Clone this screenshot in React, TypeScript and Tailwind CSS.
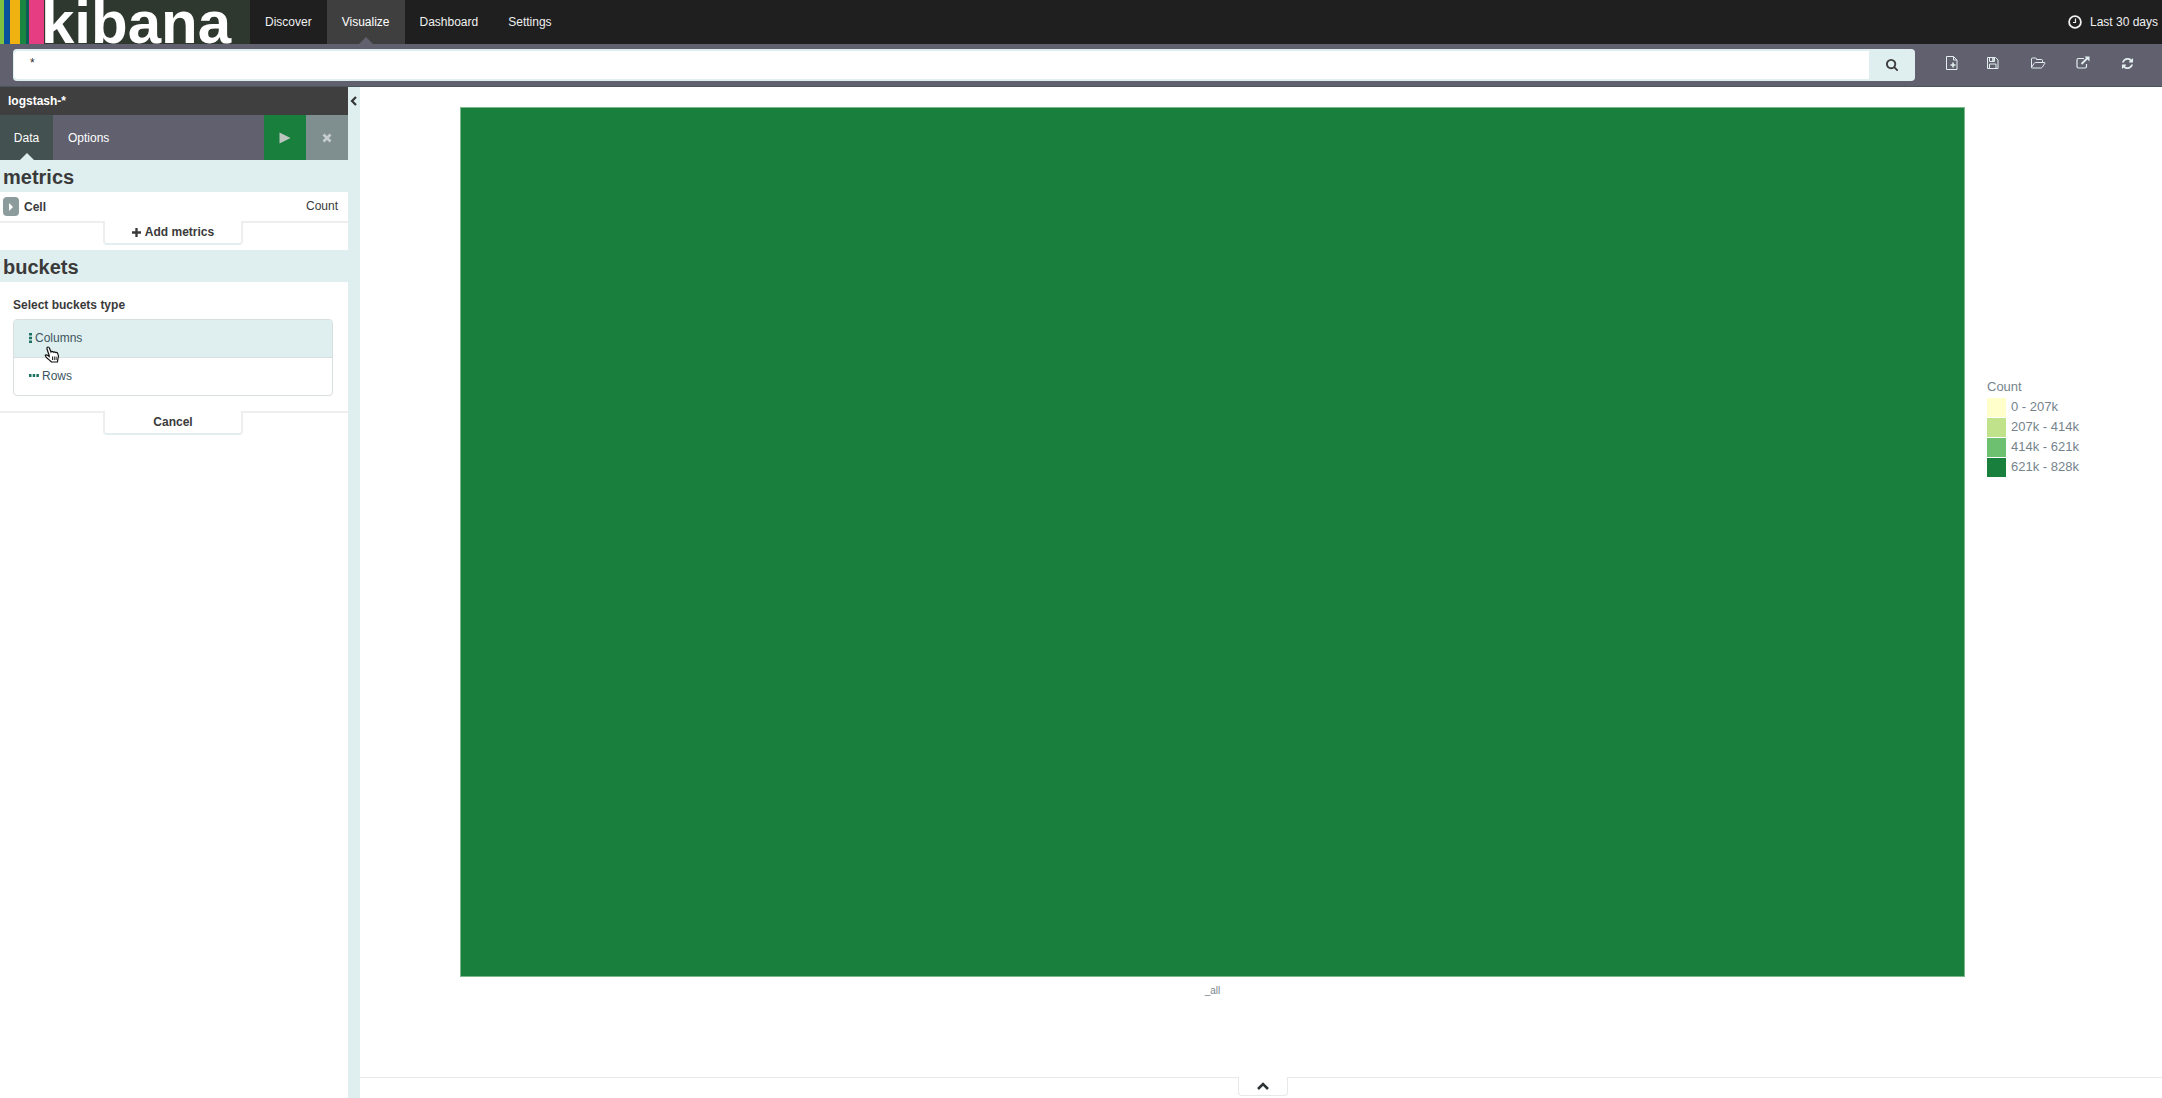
import React from 'react';

const FONT = "font-['Liberation_Sans',Arial,sans-serif]";

type IconProps = { className?: string };

const SearchIcon = ({ className }: IconProps) => (
  <svg viewBox="0 0 1792 1792" fill="currentColor" className={className} aria-hidden="true">
    <path d="M1152 704q0-185-131.5-316.5t-316.5-131.5-316.5 131.5-131.5 316.5 131.5 316.5 316.5 131.5 316.5-131.5 131.5-316.5zm512 832q0 52-38 90t-90 38q-54 0-90-38l-343-342q-179 124-399 124-143 0-273.5-55.5t-225-150-150-225-55.5-273.5 55.5-273.500 150-225 225-150 273.500-55.500 273.500 55.500 225 150 150 225 55.500 273.500q0 220-124 399l343 343q37 37 37 90z" />
  </svg>
);

const RefreshIcon = () => (
  <svg viewBox="0 0 1792 1792" fill="currentColor" className="size-[13px]" aria-hidden="true">
    <path d="M1639 1056q0 5-1 7-64 268-268 434.5t-478 166.5q-146 0-282.5-55t-243.5-157l-129 129q-19 19-45 19t-45-19-19-45v-448q0-26 19-45t45-19h448q26 0 45 19t19 45-19 45l-137 137q71 66 161 102t187 36q134 0 250-65t186-179q11-17 53-117 8-23 30-23h192q13 0 22.5 9.5t9.5 22.5zm25-800v448q0 26-19 45t-45 19h-448q-26 0-45-19t-19-45 19-45l138-138q-148-137-349-137-134 0-250 65t-186 179q-11 17-53 117-8 23-30 23h-199q-13 0-22.5-9.5t-9.5-22.5v-7q65-268 270-434.5t480-166.5q146 0 284 55.5t245 156.5l130-129q19-19 45-19t45 19 19 45z" />
  </svg>
);

const NewIcon = () => (
  <svg viewBox="0 0 14 14" fill="none" stroke="currentColor" className="size-3.5" aria-hidden="true">
    <path d="M1.500.5h7l3.500 3.500v9.500h-10.500z M8.500.5v3.500h3.500" />
    <path d="M8 6.500v5 M5.500 9h5" strokeWidth="1.600" />
  </svg>
);

const SaveIcon = () => (
  <svg viewBox="0 0 14 14" fill="none" stroke="currentColor" className="size-3.5" aria-hidden="true">
    <path d="M1.500 1.500h8l2.500 2.500v8.500h-10.500z M3.500 12.500v-4.500h6.500v4.500 M3.500 1.500v4h5v-4" />
    <path d="M7 2v3" strokeWidth="1.600" />
  </svg>
);

const FolderIcon = () => (
  <svg viewBox="0 0 16 14" fill="none" stroke="currentColor" strokeLinejoin="round" className="h-3.5 w-4" aria-hidden="true">
    <path d="M1.500 11.500v-8.500q0-1 1-1h3q1 0 1 1v.5h5q1 0 1 1v2 M1.500 11.500l2.500-4q.5-1 1.500-1h9q.8 0 .4.700l-2.500 3.900q-.6.900-1.600.9h-8.500q-.9 0-.8-.5z" />
  </svg>
);

const ShareIcon = () => (
  <svg viewBox="0 0 14 14" fill="none" stroke="currentColor" className="size-3.5" aria-hidden="true">
    <path d="M8 2.500h-5.500q-1.500 0-1.500 1.500v6.500q0 1.500 1.500 1.500h6.500q1.500 0 1.500-1.500v-2.500" strokeWidth="1.200" />
    <path d="M5.500 8l6-6" strokeWidth="1.800" />
    <path d="M8.500.5h5v5z" fill="currentColor" stroke="none" />
  </svg>
);

const ClockIcon = () => (
  <svg viewBox="0 0 14 14" fill="none" stroke="currentColor" className="size-3.5" aria-hidden="true">
    <circle cx="7" cy="7" r="5.900" strokeWidth="1.800" />
    <path d="M7.500 3.500v4h-2.500" strokeWidth="1.200" />
  </svg>
);

const HandCursor = () => (
  <svg viewBox="0 0 16 17" className="h-[17px] w-4" aria-hidden="true">
    <path
      d="M5.200 9.500L3 3Q2.700 1.200 4 1Q5 .9 5.500 2.200L7 6Q7.500 5 8.800 5.600L9.300 6.200Q10.300 5.300 11.500 6.500Q12.600 5.900 13.500 7Q15 9.500 14 12.200L13.500 16H7.500Q5 13.500 3.200 12.200Q1 10.200 1.200 9.200Q2.500 8.200 4 9.600L5.200 10.500z"
      fill="#fff"
      stroke="#111"
      strokeWidth="1.200"
    />
    <path d="M8.500 10.500v3.500 M10.300 10.500v3.500 M12.100 10.500v3.500" stroke="#111" strokeWidth=".9" />
  </svg>
);

const nav = ['Discover', 'Visualize', 'Dashboard', 'Settings'];

const tools = [
  { label: 'New visualization', icon: <NewIcon />, width: 'w-[41px]' },
  { label: 'Save visualization', icon: <SaveIcon />, width: 'w-[42px]' },
  { label: 'Load visualization', icon: <FolderIcon />, width: 'w-[48px]' },
  { label: 'Share visualization', icon: <ShareIcon />, width: 'w-[42px]' },
  { label: 'Refresh', icon: <RefreshIcon />, width: 'w-[46px]' },
];

const legend = [
  { label: '0 - 207k', color: 'bg-[#ffffcc]' },
  { label: '207k - 414k', color: 'bg-[#bfe28b]' },
  { label: '414k - 621k', color: 'bg-[#6dc06f]' },
  { label: '621k - 828k', color: 'bg-[#18803c]' },
];

function TopNav() {
  return (
    <header className="flex h-11 bg-[#1f1f1f] text-xs text-[#f0f0f0]">
      <a href="#" aria-label="kibana" className="flex w-[250px] bg-[#2e382e]">
        <span className="w-1 bg-[#7fc241]" />
        <span className="w-1.5 bg-[#07529a]" />
        <span className="w-2.5 bg-[#efb211]" />
        <span className="w-1.5 bg-[#1a8541]" />
        <span className="w-[3px] bg-[#0a5f55]" />
        <span className="w-[15px] bg-[#e53c82]" />
        <span className="-ml-[3px] pt-0.5 text-[60px] leading-[42px] font-bold text-white">kibana</span>
      </a>
      <nav className="flex">
        {nav.map((item) => (
          <a
            key={item}
            href="#"
            className={
              item === 'Visualize'
                ? 'relative bg-[#3f3f3f] px-[15px] pt-3.5 leading-4 text-white'
                : 'px-[15px] pt-3.5 leading-4'
            }
          >
            {item}
            {item === 'Visualize' && (
              <span className="absolute bottom-0 left-1/2 -translate-x-1/2 border-x-[7px] border-b-[7px] border-x-transparent border-b-[#60606f]" />
            )}
          </a>
        ))}
      </nav>
      <button className="mr-1 ml-auto flex h-8 items-center gap-2 pt-3">
        <ClockIcon />
        Last 30 days
      </button>
    </header>
  );
}

function QueryBar() {
  return (
    <div className="flex h-[43px] items-start border-b border-[#4b555c] bg-[#60606f] pt-[5px] pr-3 pl-[13px]">
      <form className="flex h-8 flex-1 overflow-hidden rounded border-y-2 border-l border-[#dfeeee] bg-[#dfeeee]" onSubmit={(e) => e.preventDefault()}>
        <input
          aria-label="Query"
          defaultValue="*"
          className="flex-1 rounded-l-sm bg-white pb-1 pl-4 text-xs text-[#2d2d2d] outline-none"
        />
        <button aria-label="Search" className="flex w-[46px] items-center justify-center text-[#3c3c3c]">
          <SearchIcon className="size-[13px]" />
        </button>
      </form>
      <div className="ml-4 flex h-7 text-[#e3efef]">
        {tools.map((t) => (
          <button key={t.label} aria-label={t.label} className={`${t.width} flex items-center justify-center`}>
            {t.icon}
          </button>
        ))}
      </div>
    </div>
  );
}

function FooterTab({ children }: { children: React.ReactNode }) {
  return (
    <div className="flex h-7 items-start">
      <span className="h-0.5 flex-1 bg-[#eee]" />
      <button className="h-6 w-[140px] rounded-b border-x-2 border-b-2 border-[#eee] border-b-[#e3eeee] text-xs leading-[22px] font-bold">
        {children}
      </button>
      <span className="h-0.5 w-[105px] bg-[#eee]" />
    </div>
  );
}

function Sidebar() {
  return (
    <aside className="flex w-[360px] shrink-0 bg-[#dfeeee] text-xs text-[#3a3a3a]">
      <div className="flex w-[348px] flex-col bg-white">
        <div className="h-7 bg-[#3f3f3f] pl-2 leading-7 font-bold text-white">logstash-*</div>
        <div className="flex h-[45px] bg-[#60606f] text-white">
          <button className="relative w-[53px] bg-[#435150]">
            Data
            <span className="absolute bottom-0 left-1/2 -translate-x-1/2 border-x-[7px] border-b-[7px] border-x-transparent border-b-[#dfeeee]" />
          </button>
          <button className="px-[15px]">Options</button>
          <button aria-label="Apply changes" className="ml-auto flex w-[42px] items-center justify-center bg-[#18803c] text-[#bcc6bf]">
            <svg viewBox="0 0 12 12" className="size-3" fill="currentColor" aria-hidden="true">
              <path d="M.5.5L11.500 6L.5 11.500z" />
            </svg>
          </button>
          <button aria-label="Discard changes" className="flex w-[42px] items-center justify-center bg-[#7f8f8f] text-[#c6cccf]">
            <svg viewBox="0 0 10 10" className="size-2.5" stroke="currentColor" strokeWidth="2.600" aria-hidden="true">
              <path d="M1.500 1.500l7 7M8.500 1.500l-7 7" />
            </svg>
          </button>
        </div>
        <h2 className="h-8 bg-[#dfeeee] pl-[3px] text-xl leading-[34px] font-bold">metrics</h2>
        <div className="flex h-[29px] items-center pr-2.5 pl-[3px]">
          <button aria-label="Toggle Cell" className="flex h-[19px] w-4 items-center justify-center rounded-sm bg-[#8c9c9c] text-white">
            <svg viewBox="0 0 4 8" className="h-2 w-1" fill="currentColor" aria-hidden="true">
              <path d="M0 0L4 4L0 8z" />
            </svg>
          </button>
          <span className="ml-[5px] font-bold">Cell</span>
          <span className="ml-auto pb-0.5">Count</span>
        </div>
        <FooterTab>
          <span className="flex h-[22px] items-center justify-center gap-1">
            <svg viewBox="0 0 10 10" className="size-[9px]" stroke="currentColor" strokeWidth="2.600" aria-hidden="true">
              <path d="M5 0v10M0 5h10" />
            </svg>
            Add metrics
          </span>
        </FooterTab>
        <h2 className="mt-px h-8 bg-[#dfeeee] pl-[3px] text-xl leading-[34px] font-bold">buckets</h2>
        <div className="px-[13px] pt-[15px]">
          <h3 className="leading-4 font-bold">Select buckets type</h3>
          <ul className="mt-1.5 mr-0.5 overflow-hidden rounded border border-[#d9dede] text-[#3c5560]">
            <li className="border-b border-[#d9dede] bg-[#dfeeee]">
              <button className="relative flex h-[37px] w-full items-center gap-[3px] pb-0.5 pl-[15px]">
                <svg viewBox="0 0 3 10" className="h-2.5 w-[3px]" fill="#1c7263" aria-hidden="true">
                  <path d="M0 0h3v2.500h-3zM0 3.700h3v2.500h-3zM0 7.400h3v2.500h-3z" />
                </svg>
                Columns
                <span className="absolute top-[26px] left-[30px]">
                  <HandCursor />
                </span>
              </button>
            </li>
            <li>
              <button className="flex h-[37px] w-full items-center gap-[3px] pb-0.5 pl-[15px]">
                <svg viewBox="0 0 10 3" className="h-[3px] w-2.5" fill="#1c7263" aria-hidden="true">
                  <path d="M0 0h2.500v3h-2.500zM3.700 0h2.500v3h-2.500zM7.400 0h2.500v3h-2.500z" />
                </svg>
                Rows
              </button>
            </li>
          </ul>
        </div>
        <div className="mt-[15px]">
          <FooterTab>Cancel</FooterTab>
        </div>
      </div>
      <button aria-label="Collapse sidebar" className="flex h-7 flex-1 items-center justify-center">
        <svg viewBox="0 0 8 10" className="h-2.5 w-2" fill="none" stroke="#333" strokeWidth="2.200" aria-hidden="true">
          <path d="M6 1L2 5L6 9" />
        </svg>
      </button>
    </aside>
  );
}

function Chart() {
  return (
    <main className="flex flex-1 flex-col bg-white">
      <div className="flex flex-1 pt-5 pl-[100px]">
        <div className="flex flex-1 flex-col">
          <div className="flex-1 border border-[#7fb78d] bg-[#18803c]" />
          <div className="h-[100px] pt-2 text-center text-[10px] leading-3 text-[#7b858c]">_all</div>
        </div>
        <div className="w-[197px] shrink-0 pt-[270px] pl-[22px] text-[13px] leading-5 text-[#75848c]">
          <div>Count</div>
          <ul>
            {legend.map((row) => (
              <li key={row.label} className="flex h-5 items-center gap-[5px]">
                <span className={`${row.color} size-[19px]`} />
                {row.label}
              </li>
            ))}
          </ul>
        </div>
      </div>
      <div className="flex h-[21px] items-start">
        <span className="h-px flex-1 bg-[#e6e9e9]" />
        <button aria-label="Show table" className="flex h-[19px] w-[50px] items-center justify-center rounded-b border-x border-b border-[#e6e9e9]">
          <svg viewBox="0 0 12 8" className="h-2 w-3" fill="none" stroke="#2d3335" strokeWidth="2.600" aria-hidden="true">
            <path d="M1 7L6 2L11 7" />
          </svg>
        </button>
        <span className="mr-[-3px] h-px flex-1 bg-[#e6e9e9]" />
      </div>
    </main>
  );
}

export default function App() {
  return (
    <div className={`${FONT} flex min-h-screen flex-col overflow-x-hidden bg-white`}>
      <TopNav />
      <QueryBar />
      <div className="flex flex-1">
        <Sidebar />
        <Chart />
      </div>
    </div>
  );
}
